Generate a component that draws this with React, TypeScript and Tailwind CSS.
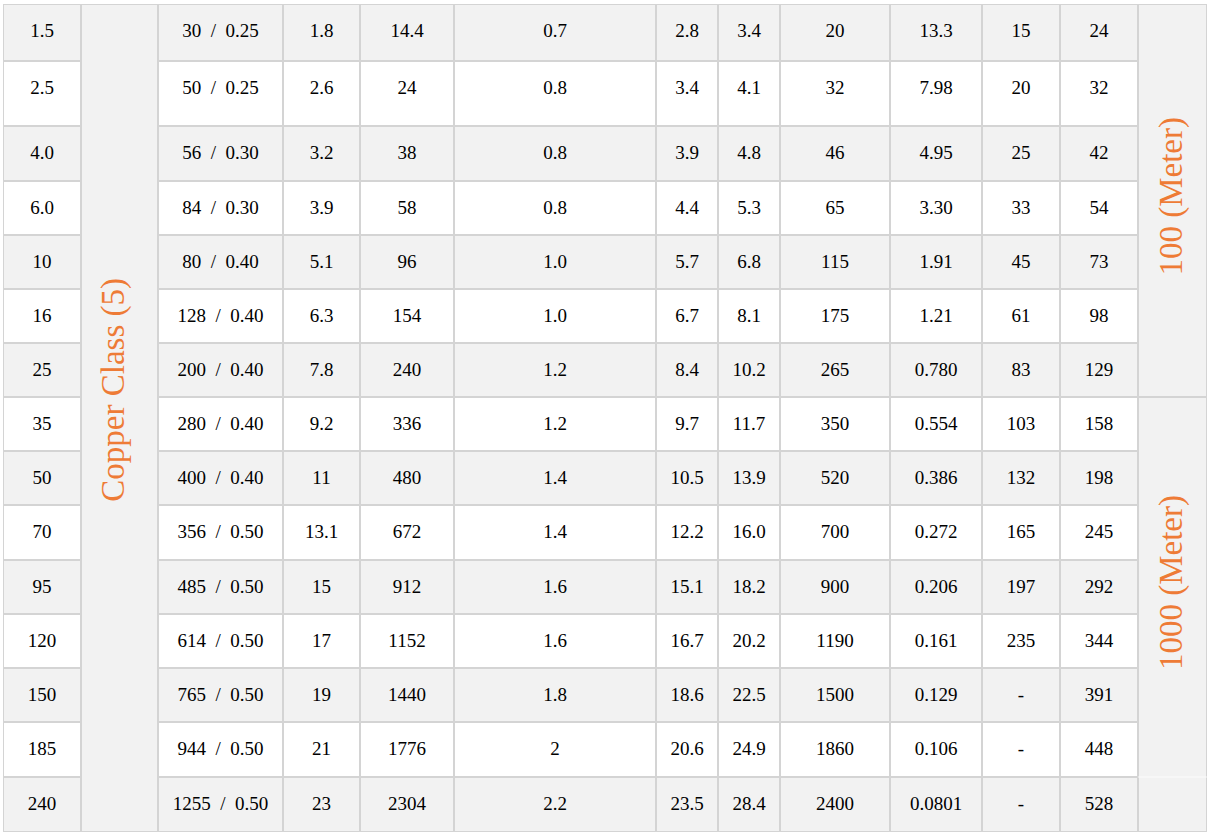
import React from "react";

const rows: string[][] = [
  ["1.5", "30 / 0.25", "1.8", "14.4", "0.7", "2.8", "3.4", "20", "13.3", "15", "24"],
  ["2.5", "50 / 0.25", "2.6", "24", "0.8", "3.4", "4.1", "32", "7.98", "20", "32"],
  ["4.0", "56 / 0.30", "3.2", "38", "0.8", "3.9", "4.8", "46", "4.95", "25", "42"],
  ["6.0", "84 / 0.30", "3.9", "58", "0.8", "4.4", "5.3", "65", "3.30", "33", "54"],
  ["10", "80 / 0.40", "5.1", "96", "1.0", "5.7", "6.8", "115", "1.91", "45", "73"],
  ["16", "128 / 0.40", "6.3", "154", "1.0", "6.7", "8.1", "175", "1.21", "61", "98"],
  ["25", "200 / 0.40", "7.8", "240", "1.2", "8.4", "10.2", "265", "0.780", "83", "129"],
  ["35", "280 / 0.40", "9.2", "336", "1.2", "9.7", "11.7", "350", "0.554", "103", "158"],
  ["50", "400 / 0.40", "11", "480", "1.4", "10.5", "13.9", "520", "0.386", "132", "198"],
  ["70", "356 / 0.50", "13.1", "672", "1.4", "12.2", "16.0", "700", "0.272", "165", "245"],
  ["95", "485 / 0.50", "15", "912", "1.6", "15.1", "18.2", "900", "0.206", "197", "292"],
  ["120", "614 / 0.50", "17", "1152", "1.6", "16.7", "20.2", "1190", "0.161", "235", "344"],
  ["150", "765 / 0.50", "19", "1440", "1.8", "18.6", "22.5", "1500", "0.129", "-", "391"],
  ["185", "944 / 0.50", "21", "1776", "2", "20.6", "24.9", "1860", "0.106", "-", "448"],
  ["240", "1255 / 0.50", "23", "2304", "2.2", "23.5", "28.4", "2400", "0.0801", "-", "528"],
];

// row heights measured from the screenshot
const heights = [
  "h-[57px]", "h-[65px]", "h-[55px]", "h-[54px]", "h-[54px]",
  "h-[54px]", "h-[54px]", "h-[54px]", "h-[54px]", "h-[55px]",
  "h-[54px]", "h-[54px]", "h-[54px]", "h-[55px]", "h-[55px]",
];

const cols = [
  "w-[78px]", "w-[77px]", "w-[125px]", "w-[77px]", "w-[94px]", "w-[202px]", "w-[62px]",
  "w-[62px]", "w-[110px]", "w-[92px]", "w-[78px]", "w-[78px]", "w-[69px]",
];

const cell =
  "border border-[#d4d4d4] align-top pt-[15px] leading-[22px] text-center whitespace-nowrap font-['Liberation_Serif','Times_New_Roman',serif]";

const fmt = (s: string) => s.replace(" / ", "\u00a0 /\u00a0 ");

const Vertical = ({ children }: { children: React.ReactNode }) => (
  <span className="inline-block rotate-180 font-['Liberation_Serif','Times_New_Roman',serif] text-[33px] leading-[36px] text-[#ee7b36] [writing-mode:vertical-rl]">
    {children}
  </span>
);

export default function App() {
  return (
    <div className="min-h-screen bg-white pl-[3px] pt-[4px] font-['Liberation_Serif','Times_New_Roman',serif]">
      <table className="table-fixed w-[1204px] border-separate border-spacing-0 text-[19px] text-black">
        <colgroup>
          {cols.map((c, i) => (
            <col key={i} className={c} />
          ))}
        </colgroup>
        <tbody>
          {rows.map((r, i) => {
            const bg = i % 2 === 0 ? "bg-[#f2f2f2]" : "bg-white";
            return (
              <tr key={i} className={heights[i]}>
                <td className={`${cell} ${bg}`}>{r[0]}</td>
                {i === 0 && (
                  <td
                    rowSpan={15}
                    className="border border-[#d4d4d4] bg-[#f2f2f2] pb-[48px] pr-[13px] text-center align-middle"
                  >
                    <Vertical>Copper Class (5)</Vertical>
                  </td>
                )}
                {r.slice(1).map((v, j) => (
                  <td key={j} className={`${cell} ${bg}`}>
                    {fmt(v)}
                  </td>
                ))}
                {i === 0 && (
                  <td rowSpan={7} className="border border-[#d4d4d4] bg-[#f2f2f2] pr-[3px] text-center align-middle">
                    <Vertical>100 (Meter)</Vertical>
                  </td>
                )}
                {i === 7 && (
                  <td
                    rowSpan={7}
                    className="border border-[#d4d4d4] border-b-[#f7f7f7] bg-[#f2f2f2] pr-[3px] text-center align-middle"
                  >
                    <Vertical>1000 (Meter)</Vertical>
                  </td>
                )}
                {i === 14 && (
                  <td className="border border-[#d4d4d4] border-t-[#f7f7f7] bg-[#f2f2f2]"></td>
                )}
              </tr>
            );
          })}
        </tbody>
      </table>
    </div>
  );
}
